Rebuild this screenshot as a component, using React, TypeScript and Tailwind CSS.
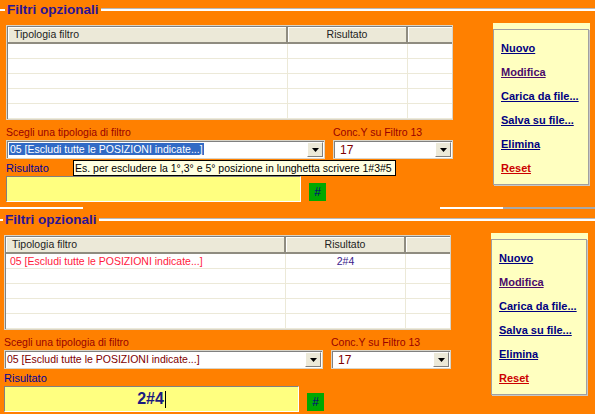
import React from 'react'

const font = "font-['Liberation_Sans',Arial,sans-serif]"

interface PanelProps {
  filled: boolean
  legendPad: string
  bodyPad: string
}

const Arrow = () => (
  <span className="flex h-[15px] w-[16px] shrink-0 items-center justify-center border border-t-white border-l-white border-r-[#808080] border-b-[#808080] bg-[#ECE9D8]">
    <svg width="7" height="4" viewBox="0 0 7 4">
      <path d="M0 0h7L3.5 4z" fill="#000" />
    </svg>
  </span>
)

const FilterTable = ({ filled }: { filled: boolean }) => {
  const rows = [0, 1, 2, 3, 4]
  return (
    <div className="h-[95px] w-[447px] border border-[#d8d4c8] bg-white shadow-[inset_1px_1px_0_#808080] pl-px pt-px">
      <div className="flex h-[17px] text-[10.5px] leading-[15px] text-[#222]">
        <div className="w-[280px] border-b-2 border-r-2 border-[#8f8c80] bg-[#ECE9D8] pl-[6px] shadow-[inset_1px_1px_0_#fff]">
          Tipologia filtro
        </div>
        <div className="w-[120px] border-b-2 border-r-2 border-[#8f8c80] bg-[#ECE9D8] text-center shadow-[inset_1px_1px_0_#fff]">
          Risultato
        </div>
        <div className="w-[44px] border-b-2 border-[#8f8c80] bg-[#ECE9D8] shadow-[inset_1px_1px_0_#fff]" />
      </div>
      {rows.map((r) => (
        <div key={r} className="flex h-[15px] border-b border-[#ECE9D8] text-[10.5px] leading-[14px]">
          <div className="w-[280px] border-r border-[#ECE9D8] pl-[4px] text-[#ff1a3c]">
            {filled && r === 0 ? '05 [Escludi tutte le POSIZIONI indicate...]' : ''}
          </div>
          <div className="w-[120px] border-r border-[#ECE9D8] text-center text-[#3a1a8a]">
            {filled && r === 0 ? '2#4' : ''}
          </div>
          <div className="w-[44px]" />
        </div>
      ))}
    </div>
  )
}

const Actions = () => {
  const links = [
    { label: 'Nuovo', color: 'text-[#000080]' },
    { label: 'Modifica', color: 'text-[#4a0a6a]' },
    { label: 'Carica da file...', color: 'text-[#000080]' },
    { label: 'Salva su file...', color: 'text-[#000080]' },
    { label: 'Elimina', color: 'text-[#000080]' },
    { label: 'Reset', color: 'text-[#cc0000]' }
  ]
  return (
    <div className="-mt-px w-[97px] bg-[#FFFFC0] pt-[6px]">
      <div className="flex w-[96px] flex-col gap-[11px] border border-[#a0a0a0] pb-[9px] pl-[7px] pt-[12px] shadow-[1px_1px_0_#c8c8c8]">
        {links.map((l) => (
          <a
            key={l.label}
            className={`text-[11px] font-bold leading-[13px] underline underline-offset-1 ${l.color}`}
          >
            {l.label}
          </a>
        ))}
      </div>
    </div>
  )
}

const Panel = ({ filled, legendPad, bodyPad }: PanelProps) => {
  return (
    <div className={`h-[207px] pt-[3px] ${font}`}>
      <div className="flex h-[14px] items-center">
        <span className={`h-[2px] bg-white ${legendPad}`} />
        <span className="px-[2px] text-[13.5px] font-bold leading-[14px] text-[#2a1496]">
          Filtri opzionali
        </span>
        <span className="h-[2px] flex-1 bg-white shadow-[0_-1px_0_#b8b8b8]" />
      </div>

      <div className={`mt-[7px] flex ${bodyPad}`}>
        <div className="w-[447px] pt-px">
          <FilterTable filled={filled} />

          <div className="mt-[4px] flex h-[16px] text-[10.5px] leading-[16px] text-[#990000]">
            <span className="w-[327px]">Scegli una tipologia di filtro</span>
            <span>Conc.Y su Filtro 13</span>
          </div>

          <div className="relative flex h-[19px] gap-[8px] text-[10.5px]">
            <div className="flex w-[319px] items-center border border-[#d8d4c8] bg-white pl-[2px] pr-px shadow-[inset_1px_1px_0_#808080]">
              <span className="flex-1 leading-[13px]">
                {filled ? (
                  <span className="text-[#800000]">05 [Escludi tutte le POSIZIONI indicate...]</span>
                ) : (
                  <span className="bg-[#316AC5] px-px text-white">
                    05 [Escludi tutte le POSIZIONI indicate...]
                  </span>
                )}
              </span>
              <Arrow />
            </div>
            <div className="flex w-[120px] items-center border border-[#d8d4c8] bg-white pl-[6px] pr-px shadow-[inset_1px_1px_0_#808080]">
              <span className="flex-1 text-[12px] text-[#800000]">17</span>
              <Arrow />
            </div>

            {!filled && (
              <div className="absolute left-[67px] top-[20px] z-10 h-[16px] whitespace-nowrap border border-black bg-[#FFFFE1] pl-px pr-[3px] text-[10.5px] leading-[14px] text-black">
                Es. per escludere la 1°,3° e 5° posizione in lunghetta scrivere 1#3#5
              </div>
            )}
          </div>

          <div className="h-[17px] pt-[3px] text-[11px] leading-[13px] text-[#000099]">Risultato</div>

          <div className="flex gap-[8px]">
            <div className="flex h-[26px] w-[295px] items-center justify-center border border-[#808080] border-b-white border-r-white bg-[#FFFF80] text-[16px] font-bold text-[#1a1a80]">
              {filled && (
                <>
                  <span>2#4</span>
                  <span className="ml-px h-[17px] w-px bg-black" />
                </>
              )}
            </div>
            <div className="mt-[7px] flex h-[18px] w-[17px] items-center justify-center bg-[#00a800] text-[12px] text-[#000080]">
              #
            </div>
          </div>
        </div>

        <div className="ml-[40px]">
          <Actions />
        </div>
      </div>
    </div>
  )
}

export default function App() {
  return (
    <div className="h-[414px] w-[595px] overflow-hidden bg-[#FF8000]">
      <Panel filled={false} legendPad="w-[5px]" bodyPad="pl-[6px]" />
      <div className="flex h-[3px]">
        <div className="h-[2px] w-[83px] bg-white" />
        <div className="flex-1" />
        <div className="h-[2px] w-[63px] bg-white" />
        <div className="h-[2px] w-[92px] bg-[#a8a8a8]" />
      </div>
      <Panel filled legendPad="w-[3px]" bodyPad="pl-[4px]" />
    </div>
  )
}
